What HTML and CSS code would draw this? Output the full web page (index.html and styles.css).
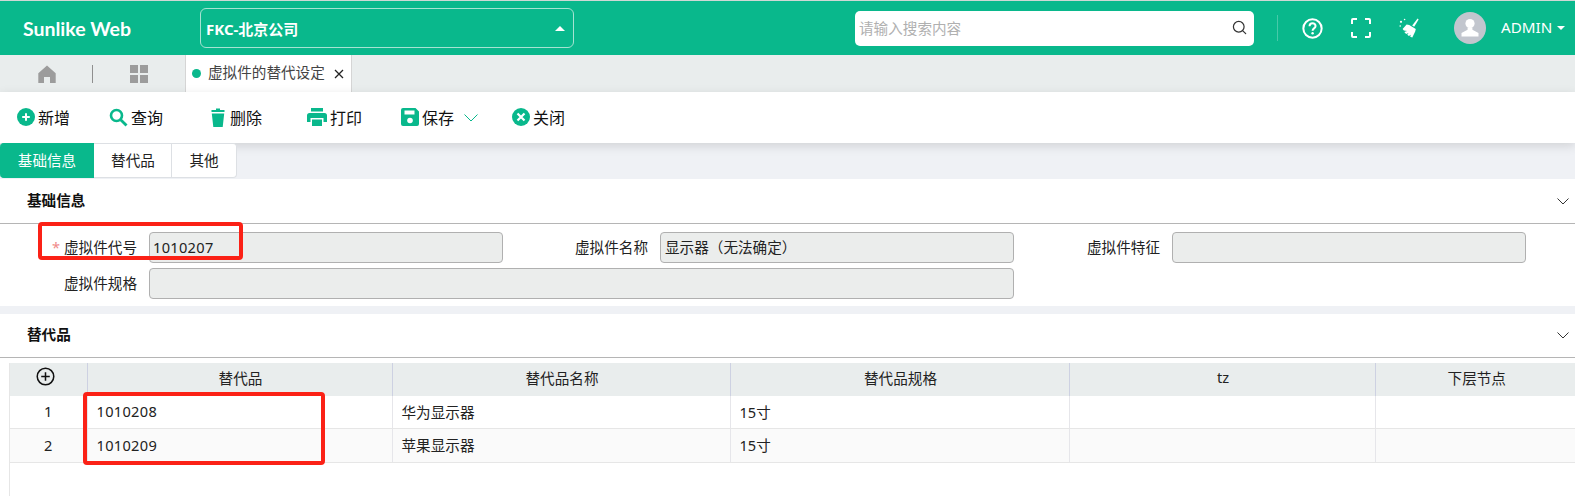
FILE: index.html
```html
<!DOCTYPE html>
<html lang="zh">
<head>
<meta charset="utf-8">
<title>虚拟件的替代设定</title>
<link rel="stylesheet" href="styles.css">
</head>
<body>
<div class="page">
  <header class="topbar">
    <div class="logo">Sunlike Web</div>
    <div class="company"><span>FKC-北京公司</span><i class="caret-up"></i></div>
    <div class="search">
      <span class="placeholder">请输入搜索内容</span>
      <svg class="search-ico" viewBox="0 0 16 16" width="15" height="15"><circle cx="7.2" cy="7.2" r="5.7" fill="none" stroke="#333" stroke-width="1.3"/><path d="M11.3 11.3L14.6 14.6" stroke="#333" stroke-width="1.3" stroke-linecap="round"/></svg>
    </div>
    <div class="vline"></div>
    <svg class="ico-help" viewBox="0 0 22 22" width="21" height="21"><circle cx="11" cy="11" r="9.6" fill="none" stroke="#fff" stroke-width="2.1"/><path d="M7.9 8.6c0-1.9 1.4-3 3.2-3s3.1 1.1 3.1 2.8c0 2.5-3.1 2.5-3.1 4.9" fill="none" stroke="#fff" stroke-width="2.1"/><circle cx="11.1" cy="16" r="1.3" fill="#fff"/></svg>
    <svg class="ico-full" viewBox="0 0 20 20" width="20" height="20"><path d="M1 6V2a1 1 0 0 1 1-1h4M14 1h4a1 1 0 0 1 1 1v4M19 14v4a1 1 0 0 1-1 1h-4M6 19H2a1 1 0 0 1-1-1v-4" fill="none" stroke="#fff" stroke-width="2"/></svg>
    <svg class="ico-broom" viewBox="0 0 20 20" width="20" height="20"><path d="M18.6 0.6l1 .8-4.400 7.400-2-1.300z" fill="#fff"/><path d="M7.600 6.600l2.600.3 6.600 4-.6 2.600-2.900 5.900-2.100-.7.6-1.900-1.900 1.100-1.600-1.200 1.300-1.700-2.500.9-1.800-1.900 2.800-1.100-3.200-.3L3.600 11z" fill="#fff"/><circle cx="2" cy="3.800" r="1.100" fill="#fff"/><circle cx="5.600" cy="1.500" r=".8" fill="#fff"/><circle cx="1.200" cy="8" r=".8" fill="#fff"/></svg>
    <div class="avatar"><svg viewBox="0 0 32 32" width="32" height="32"><circle cx="16" cy="11.500" r="4.600" fill="#fff"/><path d="M13.600 15.500v2.200L7.500 21v3.500h17V21l-6.100-3.300v-2.200z" fill="#fff"/></svg></div>
    <div class="user">ADMIN</div><i class="caret-down"></i>
  </header>

  <nav class="tabbar">
    <svg class="ico-home" viewBox="0 0 18 18" width="18" height="18"><path d="M9 0.500L0.300 8.200V18H6v-6h6v6h5.700V8.200z" fill="#9c9c9c"/></svg>
    <div class="tab-div"></div>
    <svg class="ico-grid" viewBox="0 0 18 18" width="18" height="18"><path d="M0 0h8v8H0zM10 0h8v8h-8zM0 10h8v8H0zM10 10h8v8h-8z" fill="#9c9c9c"/></svg>
    <div class="tab-open">
      <i class="dot"></i><span class="tab-title">虚拟件的替代设定</span>
      <svg viewBox="0 0 10 10" width="10" height="10"><path d="M1 1l8 8M9 1l-8 8" stroke="#222" stroke-width="1.300"/></svg>
    </div>
  </nav>

  <div class="toolbar">
    <div class="tool tool-add">
      <svg viewBox="0 0 18 18" width="18" height="18"><circle cx="9" cy="9" r="9" fill="#09b88c"/><path d="M9 5.200v7.600M5.200 9h7.600" stroke="#fff" stroke-width="2"/></svg><span>新增</span>
    </div>
    <div class="tool tool-find">
      <svg viewBox="0 0 19 19" width="19" height="19"><circle cx="7.500" cy="7.500" r="5.500" fill="none" stroke="#09b88c" stroke-width="2.600"/><path d="M11.700 11.700l5.800 5.800" stroke="#09b88c" stroke-width="2.800"/></svg><span>查询</span>
    </div>
    <div class="tool tool-del">
      <svg viewBox="0 0 14 19" width="14" height="19"><path d="M5 .5h4v1.600h4.500v1.800H.5V2.100H5zM.8 5.500h12.400l-1.500 13.500H2.300z" fill="#09b88c"/></svg><span>删除</span>
    </div>
    <div class="tool tool-print">
      <svg viewBox="0 0 20 18" width="20" height="18"><path d="M4 0h12v3.500H4zM2.500 5h15A2.500 2.500 0 0 1 20 7.500V14h-3.500v-4h-13v4H0V7.500A2.500 2.500 0 0 1 2.500 5zM5 11.500h10V18H5z" fill="#09b88c"/></svg><span>打印</span>
    </div>
    <div class="tool tool-save">
      <svg viewBox="0 0 18 18" width="18" height="18"><path d="M2 0h12.500L18 3.500V16a2 2 0 0 1-2 2H2a2 2 0 0 1-2-2V2a2 2 0 0 1 2-2zM3.500 2.500v4h10v-4z" fill="#09b88c"/><circle cx="9" cy="12.500" r="2.800" fill="#fff"/></svg><span>保存</span>
      <svg class="tool-chev" viewBox="0 0 14 8" width="14" height="8"><path d="M.5.5L7 7l6.500-6.500" fill="none" stroke="#09b88c" stroke-width="1"/></svg>
    </div>
    <div class="tool tool-close">
      <svg viewBox="0 0 18 18" width="18" height="18"><circle cx="9" cy="9" r="9" fill="#09b88c"/><path d="M5.500 5.500l7 7M12.500 5.500l-7 7" stroke="#fff" stroke-width="2.200"/></svg><span>关闭</span>
    </div>
  </div>

  <div class="subtabs">
    <div class="subtab subtab-active">基础信息</div>
    <div class="subtab subtab-sub">替代品</div>
    <div class="subtab subtab-other">其他</div>
  </div>

  <section class="panel panel-base">
    <div class="panel-head panel-head-first"><h2>基础信息</h2><svg viewBox="0 0 12 7" width="12" height="7"><path d="M.5.5L6 6l5.500-5.500" fill="none" stroke="#333" stroke-width="1"/></svg></div>
    <div class="form">
      <label class="req"><em>*</em>虚拟件代号</label><div class="input input-code digits">1010207</div>
      <label>虚拟件名称</label><div class="input">显示器（无法确定）</div>
      <label>虚拟件特征</label><div class="input"></div>
      <label>虚拟件规格</label><div class="input input-wide"></div>
    </div>
  </section>

  <section class="panel panel-sub">
    <div class="panel-head"><h2>替代品</h2><svg viewBox="0 0 12 7" width="12" height="7"><path d="M.5.5L6 6l5.500-5.500" fill="none" stroke="#333" stroke-width="1"/></svg></div>
    <div class="table-wrap">
      <table>
        <colgroup><col class="c0"><col class="c1"><col class="c2"><col class="c3"><col class="c4"><col class="c5"></colgroup>
        <thead>
          <tr>
            <th class="th-add"><svg class="add-row" viewBox="0 0 20 20" width="19" height="19"><circle cx="10" cy="10" r="8.700" fill="none" stroke="#111" stroke-width="1.600"/><path d="M10 5.500v9M5.500 10h9" stroke="#111" stroke-width="1.600"/></svg></th>
            <th>替代品</th><th>替代品名称</th><th>替代品规格</th><th>tz</th><th>下层节点</th>
          </tr>
        </thead>
        <tbody>
          <tr><td class="num">1</td><td class="digits">1010208</td><td>华为显示器</td><td>15寸</td><td></td><td></td></tr>
          <tr><td class="num">2</td><td class="digits">1010209</td><td>苹果显示器</td><td>15寸</td><td></td><td></td></tr>
        </tbody>
      </table>
    </div>
  </section>

  <div class="mark mark-code"></div>
  <div class="mark mark-rows"></div>
</div>
</body>
</html>
```

FILE: styles.css
```css
* { box-sizing: border-box; }
html, body { margin: 0; padding: 0; }
body {
  width: 1575px;
  height: 496px;
  overflow: hidden;
  background: #eff1f5;
  color: #222;
  font-family: "Noto Sans", "Noto Sans CJK SC", sans-serif;
  font-size: 14.6px;
}
.page { position: relative; width: 1575px; height: 496px; display: flex; flex-direction: column; overflow: hidden; }
.digits { letter-spacing: .3px; }

/* top bar */
.topbar { height: 55px; flex: none; background: #09b88c; border-top: 1px solid #cfd8d5; display: flex; align-items: center; color: #fff; }
.logo { margin-left: 23px; width: 177px; font-family: "Lato", "Noto Sans", sans-serif; font-weight: 700; font-size: 19.5px; }
.company { width: 374px; height: 40px; border: 1px solid #a5e3d2; border-radius: 6px; display: flex; align-items: center; justify-content: space-between; padding: 0 7px 0 5px; font-weight: 700; font-size: 15px; }
.caret-up { width: 0; height: 0; border-left: 5px solid transparent; border-right: 5px solid transparent; border-bottom: 5px solid #fff; margin-right: 1px; }
.search { margin-left: 281px; width: 399px; height: 35px; background: #fff; border-radius: 5px; display: flex; align-items: center; justify-content: space-between; padding: 0 7px 2px 4px; }
.placeholder { color: #b0b0b0; }
.vline { width: 1px; height: 26px; margin-left: 23px; background: #47c9a9; }
.ico-help { margin-left: 24px; }
.ico-full { margin-left: 28px; }
.ico-broom { margin-left: 28px; }
.avatar { margin-left: 35px; width: 32px; height: 32px; border-radius: 50%; background: #c2c6ce; overflow: hidden; }
.avatar svg { display: block; }
.user { margin-left: 15px; font-size: 15.2px; padding-bottom: 2px; }
.caret-down { margin-left: 5px; width: 0; height: 0; border-left: 4px solid transparent; border-right: 4px solid transparent; border-top: 4px solid #fff; }

/* tab bar */
.tabbar { height: 37px; flex: none; background: #e9eded; display: flex; align-items: center; }
.ico-home { margin-left: 38px; }
.tab-div { width: 1px; height: 18px; margin-left: 36px; background: #8f8f8f; }
.ico-grid { margin-left: 37px; }
.tab-open { margin-left: 37px; width: 167px; height: 37px; background: #fff; border-left: 1px solid #d5d5d5; border-right: 1px solid #d5d5d5; display: flex; align-items: center; padding-left: 6px; }
.dot { width: 9px; height: 9px; border-radius: 50%; background: #09b88c; }
.tab-title { margin-left: 7px; margin-right: 9px; color: #444; line-height: 1; padding-bottom: 2px; }

/* toolbar */
.toolbar { position: relative; z-index: 1; height: 51px; flex: none; background: #fff; display: flex; align-items: center; padding: 0 0 1px 17px; box-shadow: 0 3px 10px rgba(0,0,0,.13); font-size: 16px; color: #111; }
.tool { display: flex; align-items: center; gap: 3px; }
.tool span { padding-bottom: 1px; }
.tool-add { width: 92px; }
.tool-find { width: 102px; }
.tool-del { width: 96px; gap: 5px; }
.tool-print { width: 94px; gap: 3px; }
.tool-save { width: 111px; gap: 3px; }
.tool-chev { margin-left: 7px; margin-top: 2px; }

/* sub tabs */
.subtabs { position: relative; z-index: 2; height: 35px; flex: none; margin-bottom: 1px; display: flex; width: 237px; }
.subtab { height: 35px; padding-bottom: 3px; display: flex; align-items: center; justify-content: center; background: #fff; border: 1px solid #dde0e4; border-left: 0; color: #222; }
.subtab-active { width: 94px; padding-left: 1px; background: #09b88c; border-color: #09b88c; color: #fff; border-radius: 4px 0 0 4px; }
.subtab-sub { width: 78px; padding-left: 1px; }
.subtab-other { width: 65px; border-radius: 0 4px 4px 0; }

/* panels */
.panel { background: #fff; flex: none; }
.panel-base { height: 127px; }
.panel-sub { margin-top: 8px; flex: 1; display: flex; flex-direction: column; }
.panel-head { height: 44px; flex: none; padding: 0 6px 0 27px; display: flex; align-items: center; justify-content: space-between; border-bottom: 1px solid #b5b5b5; }
.panel-head h2 { margin: 0; padding-bottom: 5px; font-size: 14.6px; font-weight: 700; color: #111; }
.panel-head-first { height: 45px; }
.panel-head-first h2 { padding-bottom: 3px; }

.form { display: grid; grid-template-columns: 149px 354px 157px 354px 158px 354px; grid-auto-rows: 31px; row-gap: 5px; padding-top: 8px; }
.form label { display: flex; align-items: center; justify-content: flex-end; padding: 0 12px 2px 0; color: #222; }
.form label em { font-style: normal; color: #f08a8a; margin-right: 4px; }
.input { background: #ebedec; border: 1px solid #b0b0b0; border-radius: 4px; display: flex; align-items: center; padding: 0 4px 2px; color: #222; }
.input-code { padding-left: 3px; }
.input-wide { grid-column: 2 / span 3; }

/* table */
.table-wrap { flex: 1; margin: 5px 0 0 9px; border-left: 1px solid #e6e6e6; overflow: hidden; }
table { border-collapse: collapse; table-layout: fixed; width: 1566px; }
.c0 { width: 77px; } .c1 { width: 305px; } .c2 { width: 338px; } .c3 { width: 339px; } .c4 { width: 306px; } .c5 { width: 201px; }
th { height: 33px; padding: 0 0 5px 2px; background: #e9eded; font-weight: 400; color: #222; text-align: center; border-left: 1px solid #cdd1e2; }
th:first-child { border-left: 0; }
.th-add { padding: 0 5px 0 0; }
td { height: 32px; padding: 0 0 1px 9px; border-left: 1px solid #e6e6ea; border-bottom: 1px solid #e6e6e6; color: #222; }
td:first-child { border-left: 0; padding: 0 0 1px 0; }
tbody tr:nth-child(2) td { background: #fafafa; height: 34px; }
.num { text-align: center; }
.add-row { display: block; margin: 0 auto 6px; }

/* red annotation frames over the screenshot */
.mark { position: absolute; border: 4px solid #fb2116; border-radius: 4px; pointer-events: none; }
.mark-code { left: 38px; top: 222px; width: 205px; height: 38px; }
.mark-rows { left: 83px; top: 392px; width: 242px; height: 73px; }
```
